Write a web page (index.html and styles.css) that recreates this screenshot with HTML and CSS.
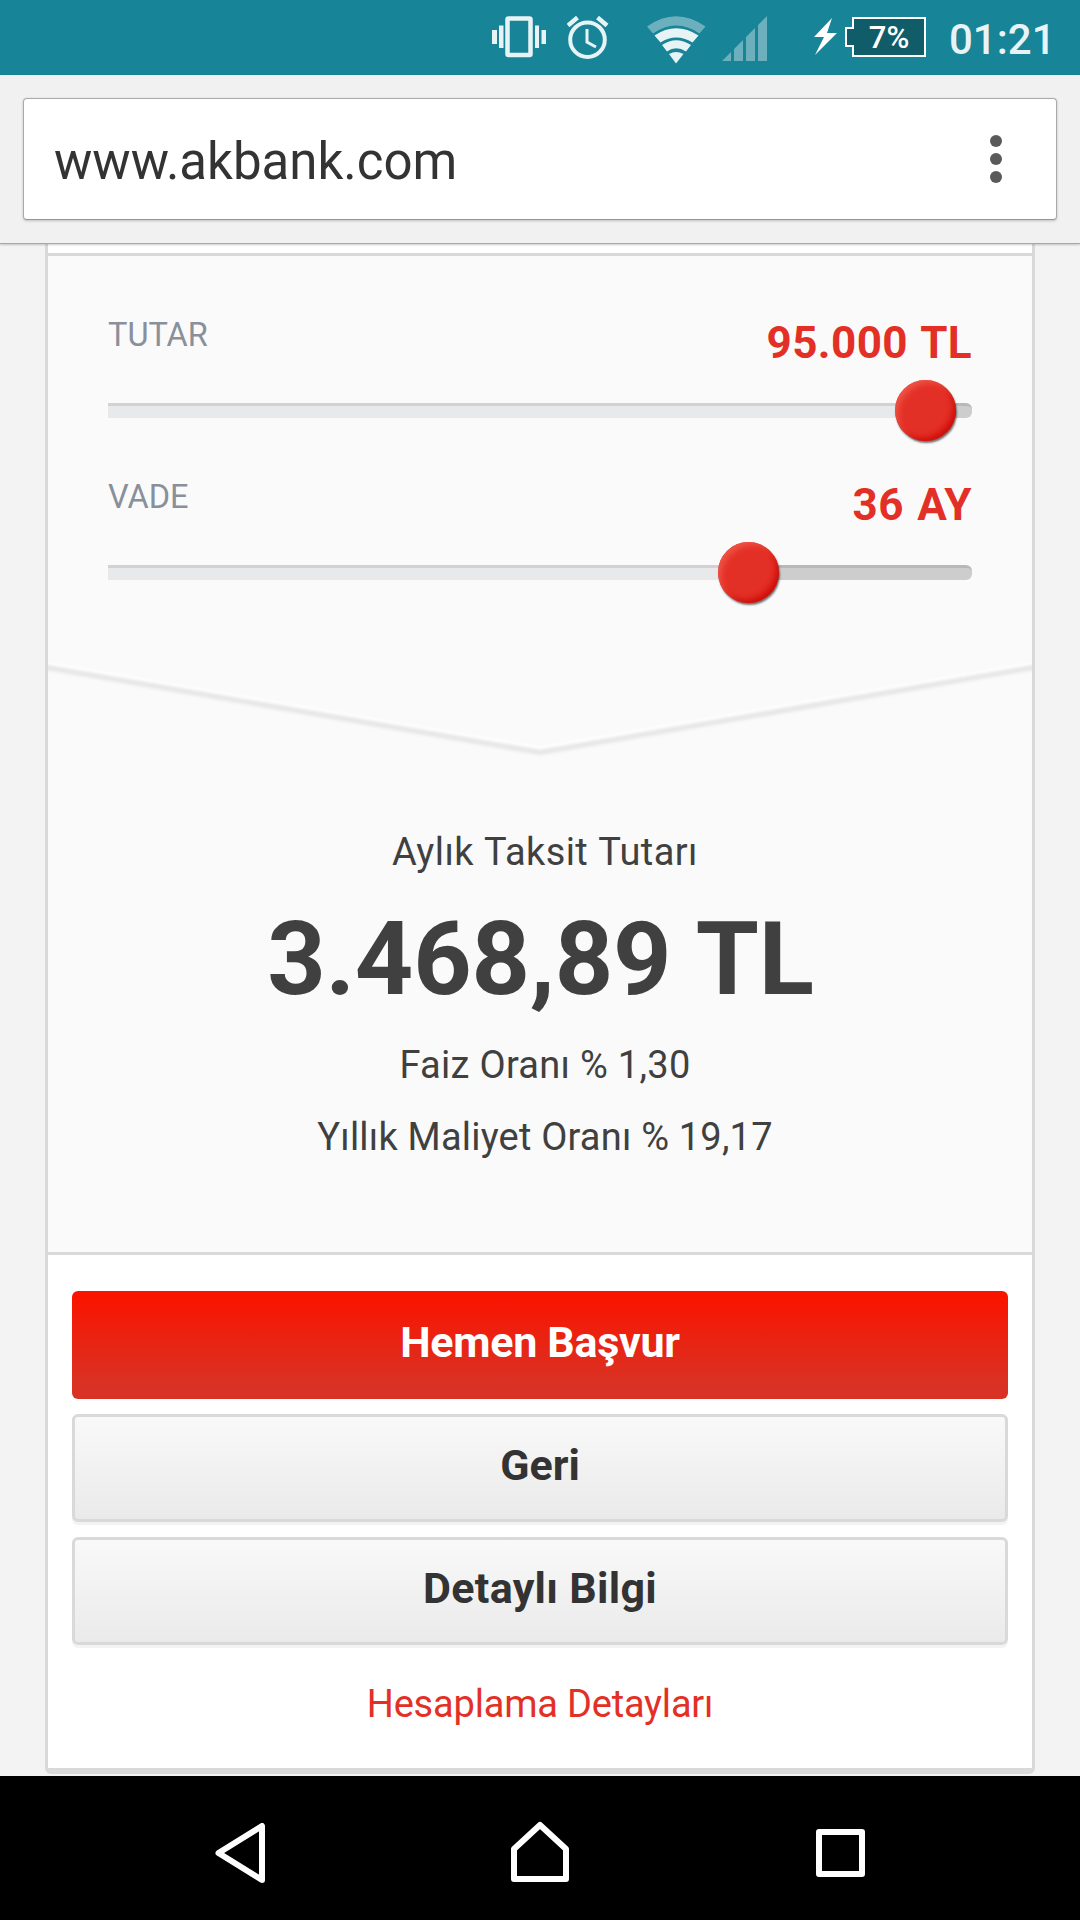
FILE: index.html
```html
<!DOCTYPE html>
<html lang="tr">
<head>
    <meta charset="UTF-8">
    <meta name="viewport" content="width=device-width, initial-scale=1.0">
    <title>Akbank - Kredi Hesaplama</title>
    <link rel="stylesheet" href="styles.css">
</head>
<body>

    <!-- Durum çubuğu -->
    <div class="status-bar">
        <svg class="icon-vibrate" width="54" height="42" viewBox="0 0 54 42" fill="#e7f3f5">
            <rect x="0" y="14" width="5" height="14"/>
            <rect x="7" y="9.500" width="4.500" height="22.500"/>
            <rect x="43" y="9.500" width="4" height="22.500"/>
            <rect x="49.500" y="14" width="4.500" height="14"/>
            <rect x="15.500" y="2.500" width="23" height="36.500" rx="1" fill="none" stroke="#e7f3f5" stroke-width="4.500"/>
        </svg>
        <svg class="icon-alarm" width="42" height="44" viewBox="0 0 42 44" fill="none" stroke="#e7f3f5">
            <circle cx="20.500" cy="23.700" r="17.300" stroke-width="4"/>
            <path d="M20 13v13l9 5" stroke-width="3"/>
            <path d="M1 9.500l9.500-8M30.500 1.500l9.500 8" stroke-width="4.500"/>
        </svg>
        <svg class="icon-wifi" width="60" height="48" viewBox="0 0 60 48">
            <path d="M0 10.500Q29-10 58.500 10.500L52.500 17.500Q29 1.500 6 17.500z" fill="#6bb0bc"/>
            <path d="M7.500 19.500Q29 5 51.500 19.500L45.500 26.500Q29 16.500 13.500 26.500z" fill="#e7f3f5"/>
            <path d="M15 29Q29 19.500 44 29L39 35.500Q29 29 20 35.500z" fill="#e7f3f5"/>
            <path d="M22 38Q29 34 36.500 38L29 47.500z" fill="#e7f3f5"/>
        </svg>
        <svg class="icon-signal" width="46" height="46" viewBox="0 0 46 46" fill="#6bb0bc">
            <path d="M0 45l9-9v9zM12 45V33l9-9v21zM24 45V21l9-9v33zM36 45V9l9-9v45z"/>
        </svg>
        <svg class="icon-battery" width="112" height="42" viewBox="0 0 112 42">
            <path d="M18 2L0 21h10L1 39l22-22H13z" fill="#fff"/>
            <path d="M39 2h72v38H39V30h-7V12h7z" fill="#105c68" stroke="#fff" stroke-width="2"/>
            <text class="battery-text" x="75" y="31.500" text-anchor="middle">7%</text>
        </svg>
        <span class="clock">01:21</span>
    </div>

    <!-- Tarayıcı adres çubuğu -->
    <header class="toolbar">
        <div class="address">
            <span class="url">www.akbank.com</span>
            <div class="menu">
                <i></i>
                <i></i>
                <i></i>
            </div>
        </div>
    </header>

    <main>
        <div class="card">
            <section class="calculator">
                <div class="slider">
                    <div class="slider-head">
                        <span class="slider-label">TUTAR</span>
                        <span class="slider-value">95.000 TL</span>
                    </div>
                    <div class="track">
                        <div class="track-fill" style="width: 94.7%"><span class="knob"></span></div>
                    </div>
                </div>
                <div class="slider">
                    <div class="slider-head">
                        <span class="slider-label">VADE</span>
                        <span class="slider-value">36 AY</span>
                    </div>
                    <div class="track">
                        <div class="track-fill" style="width: 74.2%"><span class="knob"></span></div>
                    </div>
                </div>

                <svg class="arrow" width="984" height="110" viewBox="0 0 984 110" fill="none">
                    <path class="arrow-light" d="M-10 6L492 92L994 6"/>
                    <path class="arrow-dark" d="M-10 10L492 96.500L994 10"/>
                </svg>

                <div class="result">
                    <p class="result-title">Aylık Taksit Tutarı</p>
                    <p class="amount">3.468,89 TL</p>
                    <p class="rate">Faiz Oranı % 1,30</p>
                    <p class="yearly">Yıllık Maliyet Oranı % 19,17</p>
                </div>
            </section>

            <section class="actions">
                <button class="btn btn-primary">Hemen Başvur</button>
                <button class="btn">Geri</button>
                <button class="btn btn-info">Detaylı Bilgi</button>
                <a class="details">Hesaplama Detayları</a>
            </section>
        </div>
    </main>

    <!-- Gezinme tuşları -->
    <nav>
        <svg width="60" height="60" viewBox="0 0 60 60">
            <path d="M8.500 30L52 3V57z"/>
        </svg>
        <svg width="60" height="64" viewBox="0 0 60 64">
            <path d="M4 58V28L30 4L56 28V58z"/>
        </svg>
        <svg width="60" height="60" viewBox="0 0 60 60">
            <path d="M9 9h43v42H9z"/>
        </svg>
    </nav>

</body>
</html>
```
FILE: styles.css
```css
* {
    box-sizing: border-box;
}

body {
    margin: 0;
    background: #f3f3f3;
    color: #404040;
    font-family: Roboto, "Noto Sans", sans-serif;
    height: 1920px;
    overflow: hidden;
}

svg {
    display: block;
    flex-shrink: 0;
}

.status-bar {
    display: flex;
    align-items: flex-start;
    height: 75px;
    padding-left: 492px;
    background: #178497;
}

.icon-vibrate {
    margin-top: 16px;
}

.icon-alarm {
    margin: 16px 0 0 21px;
}

.icon-wifi {
    margin: 16px 0 0 38px;
}

.icon-signal {
    margin: 16px 0 0 15px;
}

.icon-battery {
    margin: 16px 0 0 46px;
}

.battery-text {
    fill: #fff;
    font-size: 31px;
    font-weight: 500;
}

.clock {
    margin-left: 23px;
    font-size: 42px;
    font-weight: 500;
    line-height: 79px;
    color: #e7f3f5;
}

.toolbar {
    position: relative;
    height: 169px;
    padding: 23px;
    background: #f1f1f1;
    border-bottom: 1px solid #a8a8a8;
    box-shadow: 0 1px 2px rgba(0, 0, 0, 0.2);
}

.address {
    display: flex;
    justify-content: space-between;
    align-items: center;
    height: 122px;
    padding: 0 54px 0 30px;
    background: #fff;
    border: 1px solid #a9a9a9;
    border-bottom-color: #959595;
    border-radius: 4px;
    box-shadow: 0 1px 3px rgba(0, 0, 0, 0.2);
}

.url {
    font-size: 51px;
    line-height: 60px;
    padding-top: 5px;
    color: #333;
}

.menu {
    display: flex;
    flex-direction: column;
    gap: 6px;
}

.menu i {
    width: 12px;
    height: 12px;
    border-radius: 50%;
    background: #5a5a5a;
}

main {
    height: 1532px;
    padding: 0 45px;
}

.card {
    height: 1530px;
    padding-top: 9px;
    background: #fff;
    border: 3px solid #d9d9d9;
    border-top: 0;
    border-bottom-width: 6px;
    border-radius: 0 0 6px 6px;
}

.calculator {
    height: 1002px;
    padding-top: 57px;
    background: #fafafa;
    border-top: 3px solid #d9d9d9;
    border-bottom: 3px solid #d9d9d9;
}

.slider {
    margin: 0 60px 57px;
}

.slider-head {
    display: flex;
    justify-content: space-between;
    align-items: flex-start;
    height: 90px;
}

.slider-label {
    font-size: 32.5px;
    line-height: 45px;
    color: #89909a;
}

.slider-value {
    font-size: 44px;
    font-weight: 700;
    line-height: 60px;
    letter-spacing: 0.4px;
    word-spacing: 2px;
    color: #e33026;
}

.track {
    height: 15px;
    background: #cdcdcd;
    border-top: 3px solid #b8b8b8;
    border-radius: 0 6px 6px 0;
}

.track-fill {
    position: relative;
    height: 15px;
    margin-top: -3px;
    background: #e8e9ea;
    border-top: 3px solid #d2d2d2;
}

.knob {
    position: absolute;
    top: -26px;
    right: -30px;
    width: 61px;
    height: 61px;
    border-radius: 50%;
    background: #e33026;
    box-shadow: inset 5px 5px 6px -2px #ef5346, inset -5px -5px 6px -2px #cf0d0a, 1px 2px 2px rgba(0, 0, 0, 0.55);
}

.arrow {
    margin-top: 76px;
}

.arrow path {
    filter: blur(1.5px);
}

.arrow-light {
    stroke: #fff;
    stroke-width: 3;
}

.arrow-dark {
    stroke: #e6e6e6;
    stroke-width: 5;
}

.result {
    margin-top: 50px;
    text-align: center;
}

.result p {
    margin: 0;
    padding-left: 10px;
    font-size: 38px;
    line-height: 72px;
}

.result .result-title {
    letter-spacing: 0.4px;
    word-spacing: 1px;
}

.result .amount {
    padding-left: 1px;
    font-size: 102px;
    font-weight: 700;
    line-height: 142px;
    letter-spacing: -0.2px;
    word-spacing: 2px;
}

.result .rate {
    line-height: 71px;
    letter-spacing: 0.3px;
}

.result .yearly {
    letter-spacing: 0.2px;
}

.actions {
    display: flex;
    flex-direction: column;
    gap: 15px;
    padding: 36px 24px 0;
}

.btn {
    height: 108px;
    padding: 0 0 6px;
    font-family: inherit;
    font-size: 43px;
    font-weight: 700;
    color: #333;
    background: linear-gradient(#f9f9f9, #eaeaea);
    border: 3px solid #d9d9d9;
    border-radius: 6px;
    box-shadow: 0 3px 0 #f3f3f3;
}

.btn-primary {
    color: #fff;
    background: linear-gradient(#fa1400 5%, #d93224 85%);
    border: 0;
    box-shadow: none;
    letter-spacing: -0.3px;
}

.btn-info {
    letter-spacing: 0.3px;
}

.details {
    margin-top: 14px;
    font-size: 38px;
    line-height: 60px;
    letter-spacing: -0.2px;
    text-align: center;
    color: #e33026;
}

nav {
    display: flex;
    justify-content: space-between;
    align-items: center;
    height: 144px;
    padding: 10px 210px 0;
    background: #000;
}

nav path {
    fill: none;
    stroke: #fff;
    stroke-width: 6;
    stroke-linejoin: round;
}
```
